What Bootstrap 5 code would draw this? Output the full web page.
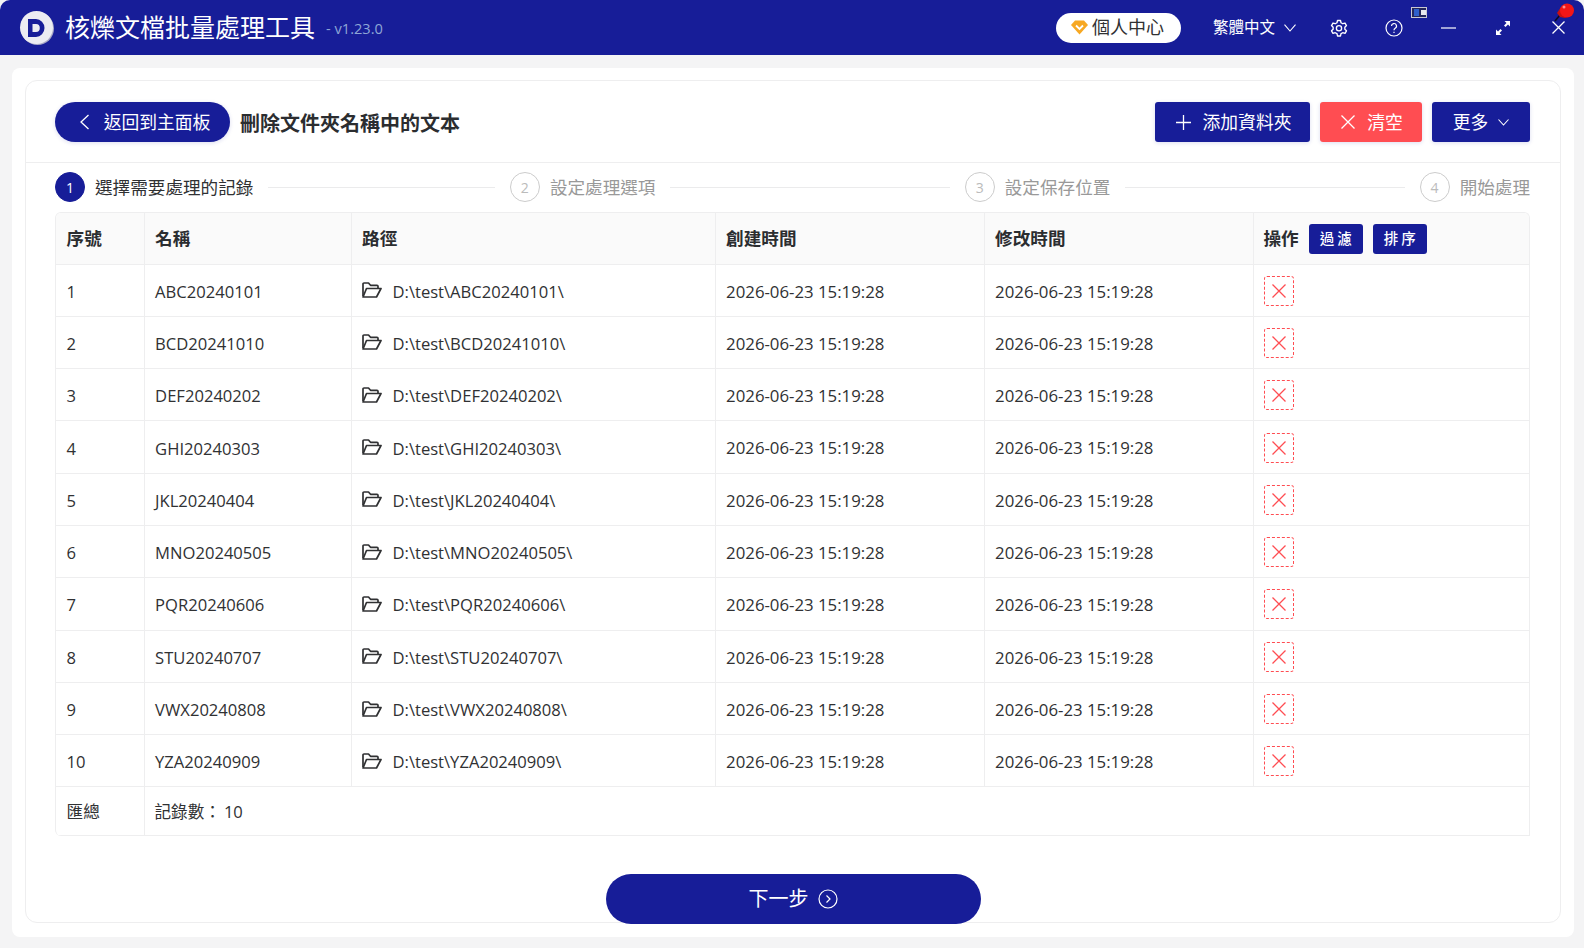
<!DOCTYPE html>
<html lang="zh-Hant">
<head>
  <meta charset="UTF-8">
  <title>核爍文檔批量處理工具</title>
  <link rel="stylesheet" href="https://cdn.jsdelivr.net/npm/bootstrap@5.3.0/dist/css/bootstrap.min.css">
  <style>
    :root { --navy: #171d98; --danger-red: #ff4d52; --line: #eeeeef; }
    html, body { height: 948px; overflow: hidden; }
    body { background: #f4f4f5; color: #303133; font-family: "Open Sans", "Noto Sans CJK TC", sans-serif; font-size: 16.6px; position: relative; }
    svg { display: block; flex: none; }

    .app-head { height: 55px; background: var(--navy); color: #fff; border-top-left-radius: 10px; border-top-right-radius: 10px; padding-left: 20px; }
    .app-logo { width: 33px; height: 33px; border-radius: 50%; background: #ececf2; box-shadow: 1px 1px 0 #a9a9c6; }
    .app-name { font-size: 25px; margin-left: 12px; line-height: 1; }
    .app-ver { font-size: 14.6px; color: #8ea6d6; margin-left: 11px; margin-top: 3px; }
    .user-pill { width: 125px; height: 30px; margin-left: auto; background: #fff; color: #303133; border-radius: 15px; font-size: 18px; padding-left: 15px; gap: 4px; }
    .lang-pick { font-size: 15.5px; margin-left: 32px; width: 82px; gap: 9px; }
    .ico-gear { margin-left: 35px; }
    .ico-help { margin-left: 37px; }
    .ico-min { margin-left: 38px; }
    .ico-max { margin-left: 40px; }
    .ico-close { margin-left: 42px; margin-right: 19px; }
    .tray-ico { position: absolute; left: 1411px; top: 7px; }
    .pin-ico { position: absolute; left: 1553px; top: 3px; }

    .shell { position: absolute; left: 12px; right: 10px; top: 68px; height: 869px; background: #fff; border-radius: 8px; padding: 12px 13px 0; }
    .work-card { height: 843px; border: 1px solid var(--line); border-radius: 12px; background: #fff; }
    .tool-row { height: 82px; padding: 21px 30px 0 29px; border-bottom: 1px solid var(--line); }
    .act-btn { height: 40px; border: 0; border-radius: 3px; background: var(--navy); color: #fff; font-size: 17.8px; display: flex; align-items: center; justify-content: center; box-shadow: 0 1px 4px rgba(23, 29, 152, .15); }
    .act-back { width: 175px; border-radius: 20px; gap: 14px; padding-left: 10px; }
    .act-add { width: 155px; gap: 12px; margin-left: auto; padding-left: 8px; }
    .act-clear { width: 102px; gap: 12px; margin-left: 10px; background: var(--danger-red); padding-left: 8px; }
    .act-more { width: 98px; gap: 10px; margin-left: 10px; }
    .page-title { font-size: 20px; font-weight: 700; margin: 7px 0 0 10px; color: #2b2d30; }

    .step-row { height: 49px; padding: 9px 30px 0 29px; }
    .step-item { flex: 1 1 0; padding-right: 15px; font-size: 17.6px; color: #999; }
    .step-item:last-child { flex: 0 0 110px; padding-right: 0; }
    .step-item.on { color: #303133; }
    .step-num { width: 30px; height: 30px; border-radius: 50%; border: 1px solid #ccc; font-size: 14px; color: #bbb; margin-right: 10px; flex: none; }
    .on .step-num { background: var(--navy); border-color: var(--navy); color: #fff; }
    .step-line { flex: 1; height: 1px; background: #ebebec; margin-left: 15px; }

    .grid-wrap { margin: 0 30px 0 29px; border: 1px solid var(--line); border-bottom: 0; border-radius: 6px 6px 0 6px; overflow: hidden; }
    .file-grid { table-layout: fixed; margin: 0; --bs-table-border-color: #eeeeef; --bs-table-color: #303133; }
    .file-grid th, .file-grid td { padding: 0 0 0 10.6px; vertical-align: middle; border-bottom: 1px solid var(--line); border-right: 1px solid var(--line); font-weight: 400; white-space: nowrap; }
    .file-grid tr > :last-child { border-right: 0; padding-left: 10px; }
    .file-grid thead th { height: 51px; background: #fafafa; font-weight: 700; font-size: 17.6px; color: #2b2d30; }
    .file-grid tbody td { height: 52.3px; padding-top: 1px; }
    .file-grid tbody td.date-cell { font-size: 16.8px; padding-top: 2px; }
    .file-grid tbody td.text-cell { padding-top: 4px; }
    .file-grid tfoot td { height: 49px; padding-top: 1px; }
    .mini-btn { height: 30px; width: 54px; margin-top: 2px; border: 0; border-radius: 3px; background: var(--navy); color: #fff; font-size: 14.5px; font-weight: 500; letter-spacing: 3px; padding: 0 0 0 3px; }
    .head-ops { gap: 10px; }
    .del-btn { width: 30px; height: 30px; border: 1px dashed var(--danger-red); border-radius: 3px; background: #fff; padding: 0; }
    .path-cell { gap: 11px; margin-left: -1.6px; }
    .path-cell svg { margin-top: -4px; }
    .sum-colon { font-family: "Noto Sans CJK SC", sans-serif; margin-right: 3px; }

    .next-btn { width: 375px; height: 50px; margin: 38px auto 0; border: 0; border-radius: 25px; background: var(--navy); color: #fff; font-size: 20px; gap: 9px; }
  </style>
</head>
<body>
  <header class="app-head d-flex align-items-center">
    <div class="app-logo d-flex align-items-center justify-content-center">
      <svg width="17" height="18" viewBox="0 0 17 18"><path fill="#171d98" fill-rule="evenodd" d="M0 0h8a8.500 9 0 0 1 0 18H0zM4.500 5v8H8a3.800 4 0 0 0 0-8z"/></svg>
    </div>
    <span class="app-name">核爍文檔批量處理工具</span>
    <span class="app-ver">- v1.23.0</span>

    <div class="user-pill d-flex align-items-center">
      <svg width="17" height="15" viewBox="0 0 17 15"><path fill="#f7a823" d="M4 .5h9l4 4.500-8.500 9.500L0 5z"/><path fill="none" stroke="#fff" stroke-width="1.800" d="M5 5.500l3.500 3.500L12 5.500"/></svg>
      <span>個人中心</span>
    </div>
    <div class="lang-pick d-flex align-items-center">
      <span class="text-nowrap">繁體中文</span>
      <svg width="12" height="8" viewBox="0 0 12 8"><path fill="none" stroke="#fff" stroke-width="1.100" d="M.5.700 6 7 11.500.700"/></svg>
    </div>
    <svg class="ico-gear" width="18" height="18" viewBox="0 0 24 24" fill="none" stroke="#fff" stroke-width="1.800" stroke-linejoin="round"><path d="M10 2h4l.7 3 2.300 1.300 3-.9 2 3.400-2.200 2.200v2.600L22 15.800l-2 3.400-3-.9-2.300 1.300-.7 3h-4l-.7-3L7 18.300l-3 .9-2-3.400 2.200-2.200v-2.600L2 8.800l2-3.400 3 .9L9.300 5z"/><circle cx="12" cy="12.300" r="3.500"/></svg>
    <svg class="ico-help" width="18" height="18" viewBox="0 0 18 18" fill="none" stroke="#fff" stroke-width="1.200"><circle cx="9" cy="9" r="8"/><path d="M6.500 7a2.500 2.500 0 1 1 3.700 2.200c-.8.500-1.200 1-1.200 2"/><path d="M9 12.800v1.200"/></svg>
    <svg class="ico-min" width="15" height="2" viewBox="0 0 15 2"><path stroke="#fff" stroke-width="1.200" d="M0 1h15"/></svg>
    <svg class="ico-max" width="14" height="14" viewBox="0 0 14 14"><path fill="#fff" d="M8.500 0H14v5.500L12 3.500 9.500 6 8 4.500l2.500-2.500zM5.500 14H0V8.500L2 10.500 4.500 8 6 9.500 3.500 12z"/></svg>
    <svg class="ico-close" width="13" height="13" viewBox="0 0 13 13"><path stroke="#fff" stroke-width="1.300" d="M.5.500l12 12M12.500.500l-12 12"/></svg>
  </header>

  <svg class="tray-ico" width="16" height="12" viewBox="0 0 16 12"><rect x=".5" y=".5" width="15" height="10" fill="#24265c" stroke="#c9c9d2"/><rect x="10" y="3" width="5" height="5" fill="#e8e8ee"/><rect x="3" y="2" width="5" height="7" fill="#2f5fcc"/></svg>
  <svg class="pin-ico" width="24" height="20" viewBox="0 0 24 20"><path stroke="#0b0b22" stroke-width="1.600" d="M7 12l-5 6"/><path fill="#c81010" d="M4 10 8 4l6-3 5 2-1 9-6 3-5-1z"/><circle cx="14" cy="7.500" r="7" fill="#f21616"/><circle cx="11" cy="4" r="1.500" fill="#ff8a8a"/></svg>

  <div class="shell">
    <main class="work-card">
      <div class="tool-row d-flex align-items-start">
        <button class="act-btn act-back" type="button">
          <svg width="11" height="16" viewBox="0 0 11 16"><path fill="none" stroke="#fff" stroke-width="1.300" d="M9.500 1 2 8l7.500 7"/></svg>
          <span>返回到主面板</span>
        </button>
        <span class="page-title">刪除文件夾名稱中的文本</span>
        <button class="act-btn act-add" type="button">
          <svg width="15" height="15" viewBox="0 0 15 15"><path stroke="#fff" stroke-width="1.300" d="M7.500 0v15M0 7.500h15"/></svg>
          <span>添加資料夾</span>
        </button>
        <button class="act-btn act-clear" type="button">
          <svg width="14" height="14" viewBox="0 0 14 14"><path stroke="#fff" stroke-width="1.300" d="M.5.500l13 13M13.500.500l-13 13"/></svg>
          <span>清空</span>
        </button>
        <button class="act-btn act-more" type="button">
          <span>更多</span>
          <svg width="11" height="7" viewBox="0 0 11 7"><path fill="none" stroke="#fff" stroke-width="1.100" d="M.5.500l5 5.500 5-5.500"/></svg>
        </button>
      </div>

      <div class="step-row d-flex align-items-start">
        <div class="step-item on d-flex align-items-center"><span class="step-num d-flex align-items-center justify-content-center">1</span><span class="text-nowrap">選擇需要處理的記錄</span><span class="step-line"></span></div>
        <div class="step-item d-flex align-items-center"><span class="step-num d-flex align-items-center justify-content-center">2</span><span class="text-nowrap">設定處理選項</span><span class="step-line"></span></div>
        <div class="step-item d-flex align-items-center"><span class="step-num d-flex align-items-center justify-content-center">3</span><span class="text-nowrap">設定保存位置</span><span class="step-line"></span></div>
        <div class="step-item d-flex align-items-center"><span class="step-num d-flex align-items-center justify-content-center">4</span><span class="text-nowrap">開始處理</span></div>
      </div>

      <div class="grid-wrap">
        <table class="table file-grid">
          <colgroup>
            <col style="width:88px"><col style="width:207px"><col style="width:364px"><col style="width:269px"><col style="width:269px"><col>
          </colgroup>
          <thead>
            <tr>
              <th>序號</th><th>名稱</th><th>路徑</th><th>創建時間</th><th>修改時間</th>
              <th>
                <div class="head-ops d-flex align-items-center">
                  <span>操作</span>
                  <button class="mini-btn" type="button">過濾</button>
                  <button class="mini-btn" type="button">排序</button>
                </div>
              </th>
            </tr>
          </thead>
          <tbody id="fileRows"></tbody>
          <tfoot>
            <tr><td>匯總</td><td colspan="5">記錄數<span class="sum-colon">：</span>10</td></tr>
          </tfoot>
        </table>
      </div>

      <button class="next-btn d-flex align-items-center justify-content-center" type="button">
        <span>下一步</span>
        <svg width="20" height="20" viewBox="0 0 20 20" fill="none" stroke="#fff" stroke-width="1.200"><circle cx="10" cy="10" r="9"/><path d="M8.500 6.500 12 10l-3.500 3.500"/></svg>
      </button>
    </main>
  </div>

  <script>
    const names = ['ABC20240101', 'BCD20241010', 'DEF20240202', 'GHI20240303', 'JKL20240404',
      'MNO20240505', 'PQR20240606', 'STU20240707', 'VWX20240808', 'YZA20240909'];
    const stamp = '2026-06-23 15:19:28';
    const folderIcon = `<svg width="21" height="16" viewBox="0 0 21 16" fill="none" stroke="#303133" stroke-width="1.700" stroke-linejoin="round"><path d="M2 14V2A1 1 0 0 1 3 1h4.500l2 2.300H16a1 1 0 0 1 1 1V6.500"/><path d="M2 15h13.500L20 6.500H5.500z"/></svg>`;
    const crossIcon = `<svg class="m-auto" width="14" height="14" viewBox="0 0 14 14"><path stroke="#ff4d52" stroke-width="1.300" d="M.5.500l13 13M13.500.500l-13 13"/></svg>`;

    document.getElementById('fileRows').innerHTML = names.map((name, i) => `
      <tr>
        <td class="text-cell">${i + 1}</td>
        <td class="text-cell">${name}</td>
        <td class="text-cell"><div class="path-cell d-flex align-items-center">${folderIcon}<span>D:\\test\\${name}\\</span></div></td>
        <td class="date-cell">${stamp}</td>
        <td class="date-cell">${stamp}</td>
        <td><button class="del-btn d-flex" type="button">${crossIcon}</button></td>
      </tr>
    `).join('');
  </script>
  <script src="https://cdn.jsdelivr.net/npm/bootstrap@5.3.0/dist/js/bootstrap.bundle.min.js"></script>
</body>
</html>
